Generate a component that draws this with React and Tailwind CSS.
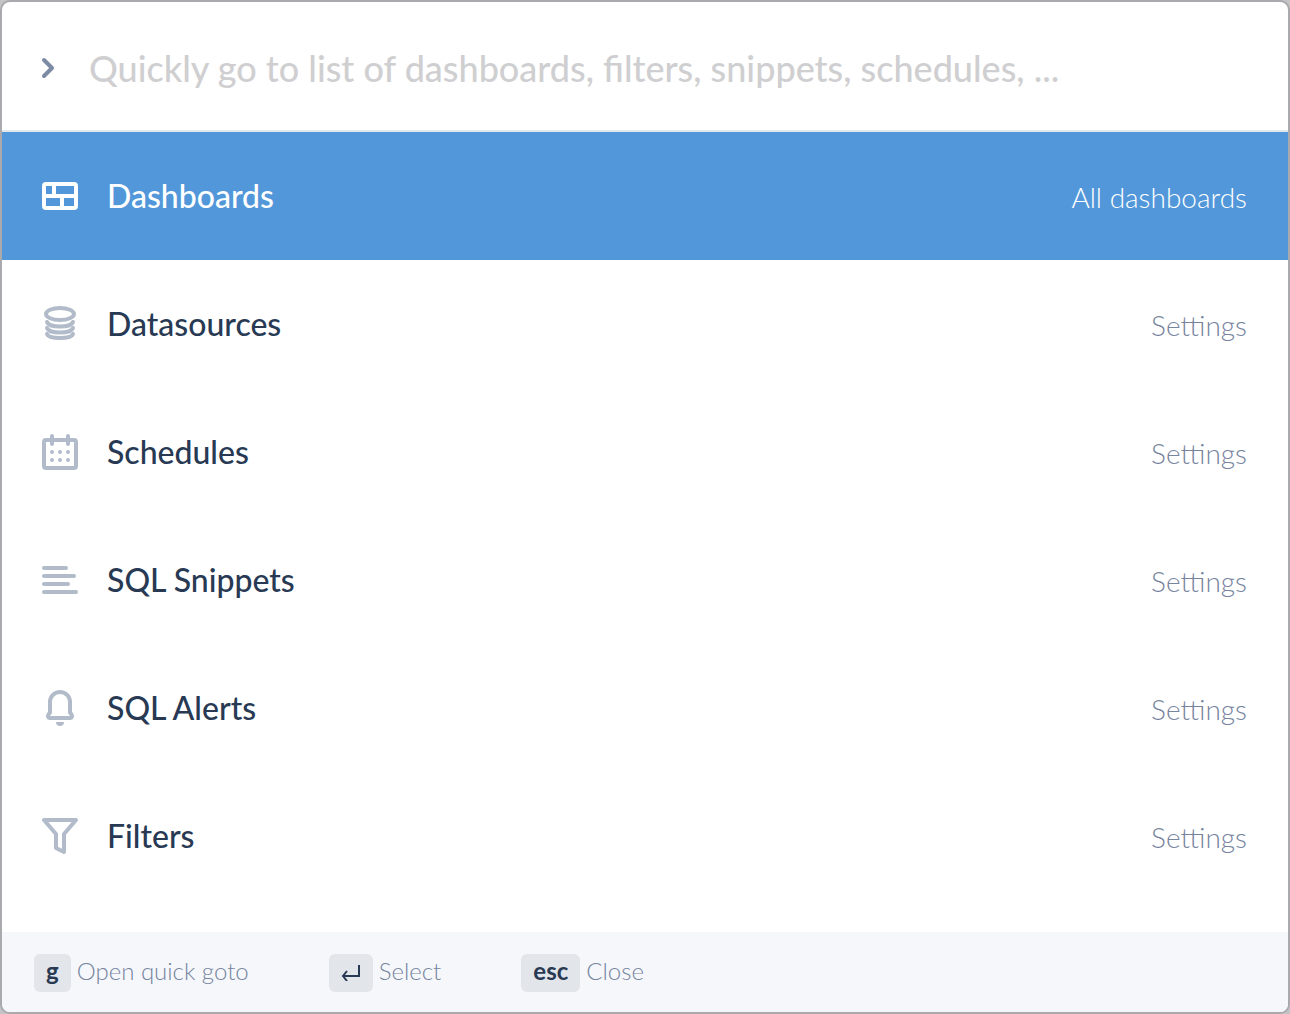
import { useState } from 'react'
import clsx from 'clsx'

function Icon({ children }) {
  return (
    <svg viewBox="0 0 36 36" className="size-9 shrink-0" fill="none" stroke="currentColor" strokeWidth="4"
      strokeLinecap="round" strokeLinejoin="round" aria-hidden="true">
      {children}
    </svg>
  )
}

const dashboardIcon = (
  <Icon>
    <rect x="2" y="6" width="32" height="24" rx="2" />
    <path d="M2 18h32M12 6v12M20 18v12" />
  </Icon>
)

const databaseIcon = (
  <Icon>
    <ellipse cx="18" cy="8" rx="14" ry="6" />
    <path d="M5 16c1 3 6 4.500 13 4.500s12-1.500 13-4.500" />
    <path d="M5 22c1 3 6 4.500 13 4.500s12-1.500 13-4.500" />
    <path d="M5 28c1 3 6 4 13 4s12-1 13-4" />
  </Icon>
)

const calendarIcon = (
  <Icon>
    <rect x="2" y="6" width="32" height="28" rx="2" />
    <path d="M10 2v8M26 2v8" />
    <path d="M10 18h0M18 18h0M26 18h0M10 26h0M18 26h0M26 26h0" />
  </Icon>
)

const snippetIcon = (
  <Icon>
    <path d="M2 6h22M2 14h30M2 22h24M2 30h32" />
  </Icon>
)

const bellIcon = (
  <Icon>
    <path d="M8 12a10 10 0 0 1 20 0v10.500l1.500 2c1 1.500 .5 3.500-1.500 3.500H8c-2 0-2.500-2-1.500-3.500l1.500-2z" />
    <path d="M14 32h8a4 4 0 0 1-8 0z" fill="currentColor" stroke="none" />
  </Icon>
)

const filterIcon = (
  <Icon>
    <path d="M2 2h32L22 16v18l-8-4V16z" />
  </Icon>
)

const ITEMS = [
  { label: 'Dashboards', section: 'All dashboards', icon: dashboardIcon },
  { label: 'Datasources', section: 'Settings', icon: databaseIcon },
  { label: 'Schedules', section: 'Settings', icon: calendarIcon },
  { label: 'SQL Snippets', section: 'Settings', icon: snippetIcon },
  { label: 'SQL Alerts', section: 'Settings', icon: bellIcon },
  { label: 'Filters', section: 'Settings', icon: filterIcon },
]

function Hint({ keyCap, children }) {
  return (
    <span className="flex items-center gap-1.5">
      <kbd className="flex h-[38px] min-w-9 items-center justify-center rounded-md bg-[#e2e5ea] px-3 pb-1 font-[Lato,sans-serif] font-bold text-[#283954]">
        {keyCap}
      </kbd>
      <span className="pb-1">{children}</span>
    </span>
  )
}

const enterKey = (
  <svg viewBox="0 0 20 20" className="size-5" fill="none" stroke="currentColor" strokeWidth="2" role="img" aria-label="Enter">
    <path d="M18 4v11H2M6 10l-4 5 4 5" />
  </svg>
)

export default function App() {
  const [query, setQuery] = useState('')
  const [selected, setSelected] = useState(0)

  return (
    <div className="bg-[#c4c4c6] font-[Lato,sans-serif]">
      <main className="flex min-h-screen flex-col overflow-hidden rounded-[10px] border-2 border-[#a9a9ae] bg-white">
        <label className="flex items-center gap-[27px] border-b-2 border-[#e2e7ec] px-9 pt-10 pb-9">
          <svg viewBox="0 0 24 24" className="size-6 shrink-0 text-[#7d8ba5]" fill="none" stroke="currentColor" strokeWidth="4" strokeLinejoin="round" strokeLinecap="round">
            <path d="M6 4l8 8-8 8" />
          </svg>
          <input value={query} onChange={e => setQuery(e.target.value)} aria-label="Go to"
            placeholder="Quickly go to list of dashboards, filters, snippets, schedules, ..."
            className="h-[52px] min-w-0 flex-1 text-4xl font-medium text-[#283954] outline-none placeholder:text-[#cfcfd1]" />
        </label>

        <ul className="flex-1">
          {ITEMS.map(({ label, section, icon }, i) => (
            <li key={label}>
              <button onClick={() => setSelected(i)}
                className={clsx('flex h-32 w-full items-center pr-[41px] pl-10 text-left', i === selected ? 'bg-[#5197d9] text-white' : 'text-[#b1bbca]')}>
                {icon}
                <span className={clsx('ml-[29px] flex-1 text-[32px] font-medium', i !== selected && 'text-[#283954]')}>{label}</span>
                <span className={clsx('pt-0.5 text-[28px] font-light', i !== selected && 'text-[#76849e]')}>{section}</span>
              </button>
            </li>
          ))}
        </ul>

        <footer className="flex items-center gap-20 bg-[#f5f7fb] px-8 pt-[22px] pb-5 text-2xl/8 font-light text-[#76849e]">
          <Hint keyCap="g">Open quick goto</Hint>
          <Hint keyCap={enterKey}>Select</Hint>
          <Hint keyCap="esc">Close</Hint>
        </footer>
      </main>
    </div>
  )
}
